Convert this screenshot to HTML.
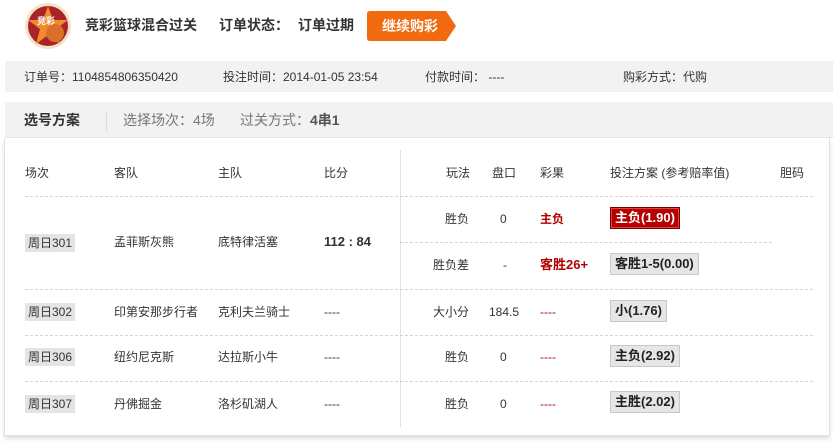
<!DOCTYPE html>
<html><head><meta charset="utf-8"><style>
*{margin:0;padding:0;box-sizing:border-box}
body{width:835px;height:445px;background:#fff;font-family:"Liberation Sans","Noto Sans CJK SC",sans-serif;font-size:12px;color:#333;position:relative;overflow:hidden}
.a{position:absolute;white-space:nowrap;line-height:16px}
.b{font-weight:bold}
.tag{position:absolute;background:#e4e4e4;height:18px;line-height:18px;padding:0 3px;color:#333}
.btn{position:absolute;height:22px;line-height:20px;padding:0 4px;font-weight:bold;font-size:13px;border:1px solid #c8c8c8;background:#e6e6e6;color:#222}
.red{color:#b30000;font-weight:bold}
.dl{position:absolute;height:0;border-top:1px dashed #d4d4d4}
</style></head><body>
<svg class="a" style="left:24px;top:2px" width="48" height="48" viewBox="0 0 48 48">
<circle cx="24" cy="24" r="23" fill="#f4e2c8"/><circle cx="24" cy="24" r="20" fill="#a8232a"/>
<polygon points="24,4 29,18 44,18 32,27 36,42 24,33 12,42 16,27 4,18 19,18" fill="#f08a2a"/>
<circle cx="31" cy="31" r="9" fill="#d9702a"/><text x="13" y="22" font-size="9" fill="#fff" font-weight="bold" font-family="Noto Sans CJK SC">竞彩</text></svg>
<div class="a b" style="left:85px;top:17px;font-size:14px;color:#333">竞彩篮球混合过关</div>
<div class="a b" style="left:219px;top:17px;font-size:14px;color:#333">订单状态：</div>
<div class="a b" style="left:298px;top:17px;font-size:14px;color:#333">订单过期</div>
<svg class="a" style="left:367px;top:11px" width="90" height="31"><path d="M3 0H79L89 15L79 30H3Q0 30 0 27V3Q0 0 3 0Z" fill="#f26a0f"/></svg>
<div class="a b" style="left:382px;top:18px;font-size:14px;color:#fff">继续购彩</div>

<div class="a" style="left:5px;top:61px;width:828px;height:31px;background:#f2f2f2"></div>
<div class="a" style="left:24px;top:69px">订单号：1104854806350420</div>
<div class="a" style="left:223px;top:69px">投注时间：2014-01-05 23:54</div>
<div class="a" style="left:425px;top:69px">付款时间： ----</div>
<div class="a" style="left:623px;top:69px">购彩方式：代购</div>

<div class="a" style="left:5px;top:102px;width:828px;height:36px;background:#f2f2f2;border-bottom:1px solid #e6e6e6"></div>
<div class="a b" style="left:24px;top:112px;font-size:14px">选号方案</div>
<div class="a" style="left:106px;top:112px;width:1px;height:20px;background:#ddd"></div>
<div class="a" style="left:123px;top:112px;font-size:14px;color:#777">选择场次：4场</div>
<div class="a" style="left:240px;top:112px;font-size:14px;color:#777">过关方式：<b style="color:#555">4串1</b></div>

<div class="a" style="left:4px;top:138px;width:826px;height:298px;border:1px solid #e2e2e2;border-top:none;box-shadow:0 3px 4px rgba(0,0,0,.12)"></div>
<div class="a" style="left:400px;top:150px;width:1px;height:277px;background:#e2e2e2"></div>

<div class="a" style="left:25px;top:165px">场次</div>
<div class="a" style="left:114px;top:165px">客队</div>
<div class="a" style="left:218px;top:165px">主队</div>
<div class="a" style="left:324px;top:165px">比分</div>
<div class="a" style="left:446px;top:165px">玩法</div>
<div class="a" style="left:492px;top:165px">盘口</div>
<div class="a" style="left:540px;top:165px">彩果</div>
<div class="a" style="left:610px;top:165px">投注方案 (参考赔率值)</div>
<div class="a" style="left:780px;top:165px">胆码</div>

<div class="dl" style="left:25px;top:196px;width:788px"></div>
<div class="dl" style="left:400px;top:242px;width:372px"></div>
<div class="dl" style="left:25px;top:289px;width:788px"></div>
<div class="dl" style="left:25px;top:335px;width:788px"></div>
<div class="dl" style="left:25px;top:381px;width:788px"></div>

<div class="tag" style="left:25px;top:234px">周日301</div>
<div class="a" style="left:114px;top:234px">孟菲斯灰熊</div>
<div class="a" style="left:218px;top:234px">底特律活塞</div>
<div class="a b" style="left:324px;top:234px;font-size:13px">112 : 84</div>
<div class="a" style="left:445px;top:211px">胜负</div>
<div class="a" style="left:500px;top:211px">0</div>
<div class="a red" style="left:540px;top:211px">主负</div>
<div class="btn" style="left:610px;top:207px;background:#b50000;border-color:#7a0000;color:#fff;box-shadow:inset 0 0 0 1px #d44">主负(1.90)</div>
<div class="a" style="left:433px;top:257px">胜负差</div>
<div class="a" style="left:503px;top:257px">-</div>
<div class="a red" style="left:540px;top:257px;font-size:13px">客胜26+</div>
<div class="btn" style="left:610px;top:253px">客胜1-5(0.00)</div>

<div class="tag" style="left:25px;top:303px">周日302</div>
<div class="a" style="left:114px;top:304px">印第安那步行者</div>
<div class="a" style="left:218px;top:304px">克利夫兰骑士</div>
<div class="a" style="left:324px;top:304px">----</div>
<div class="a" style="left:433px;top:304px">大小分</div>
<div class="a" style="left:489px;top:304px">184.5</div>
<div class="a" style="left:540px;top:304px;color:#b30000">----</div>
<div class="btn" style="left:610px;top:300px">小(1.76)</div>

<div class="tag" style="left:25px;top:348px">周日306</div>
<div class="a" style="left:114px;top:349px">纽约尼克斯</div>
<div class="a" style="left:218px;top:349px">达拉斯小牛</div>
<div class="a" style="left:324px;top:349px">----</div>
<div class="a" style="left:445px;top:349px">胜负</div>
<div class="a" style="left:500px;top:349px">0</div>
<div class="a" style="left:540px;top:349px;color:#b30000">----</div>
<div class="btn" style="left:610px;top:345px">主负(2.92)</div>

<div class="tag" style="left:25px;top:395px">周日307</div>
<div class="a" style="left:114px;top:396px">丹佛掘金</div>
<div class="a" style="left:218px;top:396px">洛杉矶湖人</div>
<div class="a" style="left:324px;top:396px">----</div>
<div class="a" style="left:445px;top:396px">胜负</div>
<div class="a" style="left:500px;top:396px">0</div>
<div class="a" style="left:540px;top:396px;color:#b30000">----</div>
<div class="btn" style="left:610px;top:391px">主胜(2.02)</div>
</body></html>
